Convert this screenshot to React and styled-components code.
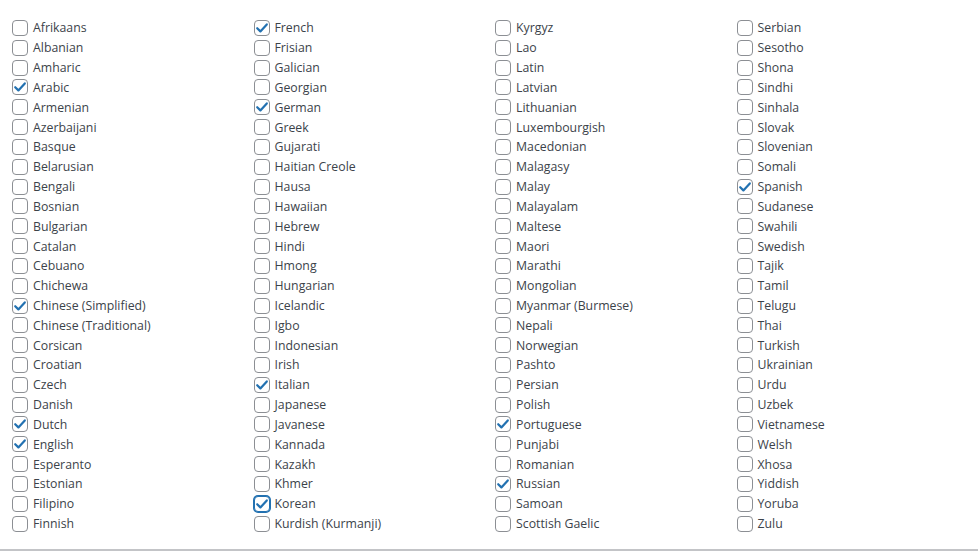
import React from "react";
import styled, { createGlobalStyle } from "styled-components";

const Global = createGlobalStyle`
  html, body { margin: 0; padding: 0; background: #fff; }
  body { font-family: "Open Sans", "Noto Sans", "Liberation Sans", sans-serif; }
`;

const columns = [
  ["Afrikaans","Albanian","Amharic","Arabic","Armenian","Azerbaijani","Basque","Belarusian","Bengali","Bosnian","Bulgarian","Catalan","Cebuano","Chichewa","Chinese (Simplified)","Chinese (Traditional)","Corsican","Croatian","Czech","Danish","Dutch","English","Esperanto","Estonian","Filipino","Finnish"],
  ["French","Frisian","Galician","Georgian","German","Greek","Gujarati","Haitian Creole","Hausa","Hawaiian","Hebrew","Hindi","Hmong","Hungarian","Icelandic","Igbo","Indonesian","Irish","Italian","Japanese","Javanese","Kannada","Kazakh","Khmer","Korean","Kurdish (Kurmanji)"],
  ["Kyrgyz","Lao","Latin","Latvian","Lithuanian","Luxembourgish","Macedonian","Malagasy","Malay","Malayalam","Maltese","Maori","Marathi","Mongolian","Myanmar (Burmese)","Nepali","Norwegian","Pashto","Persian","Polish","Portuguese","Punjabi","Romanian","Russian","Samoan","Scottish Gaelic"],
  ["Serbian","Sesotho","Shona","Sindhi","Sinhala","Slovak","Slovenian","Somali","Spanish","Sudanese","Swahili","Swedish","Tajik","Tamil","Telugu","Thai","Turkish","Ukrainian","Urdu","Uzbek","Vietnamese","Welsh","Xhosa","Yiddish","Yoruba","Zulu"],
];

const checked = new Set(["Arabic","Chinese (Simplified)","Dutch","English","French","German","Italian","Korean","Portuguese","Russian","Spanish"]);
const focused = "Korean";

const Panel = styled.div`
  box-sizing: border-box;
  width: 978px;
  height: 551px;
  padding: 18px 0 0 12px;
  border-bottom: 2px solid #c3c4c7;
  display: grid;
  grid-template-columns: repeat(4, 1fr);
  align-content: start;
`;

const Column = styled.div`
  display: flex;
  flex-direction: column;
`;

const Row = styled.label`
  height: 19.84px;
  display: flex;
  align-items: center;
  gap: 5px;
  font-size: 12.3px;
  color: #3c434a;
  white-space: nowrap;
`;

const Box = styled.span`
  box-sizing: border-box;
  width: 16px;
  height: 16px;
  flex: none;
  border: 1px solid ${p => (p.$focus ? "#2271b1" : "#8c8f94")};
  box-shadow: ${p => (p.$focus ? "0 0 0 1px #2271b1" : "none")};
  border-radius: 4px;
  background: #fff;
  display: flex;
  align-items: center;
  justify-content: center;
  svg { display: block; }
`;

const Check = () => (
  <svg width="14" height="14" viewBox="0 0 14 14">
    <path d="M2.2 7.2 L5.4 10.4 L11.8 3.4" fill="none" stroke="#2271b1" strokeWidth="2.2" strokeLinecap="round" strokeLinejoin="round" />
  </svg>
);

export default function App() {
  return (
    <>
      <Global />
      <Panel>
        {columns.map((col, i) => (
          <Column key={i}>
            {col.map(name => (
              <Row key={name}>
                <Box $focus={name === focused}>{checked.has(name) && <Check />}</Box>
                {name}
              </Row>
            ))}
          </Column>
        ))}
      </Panel>
    </>
  );
}
